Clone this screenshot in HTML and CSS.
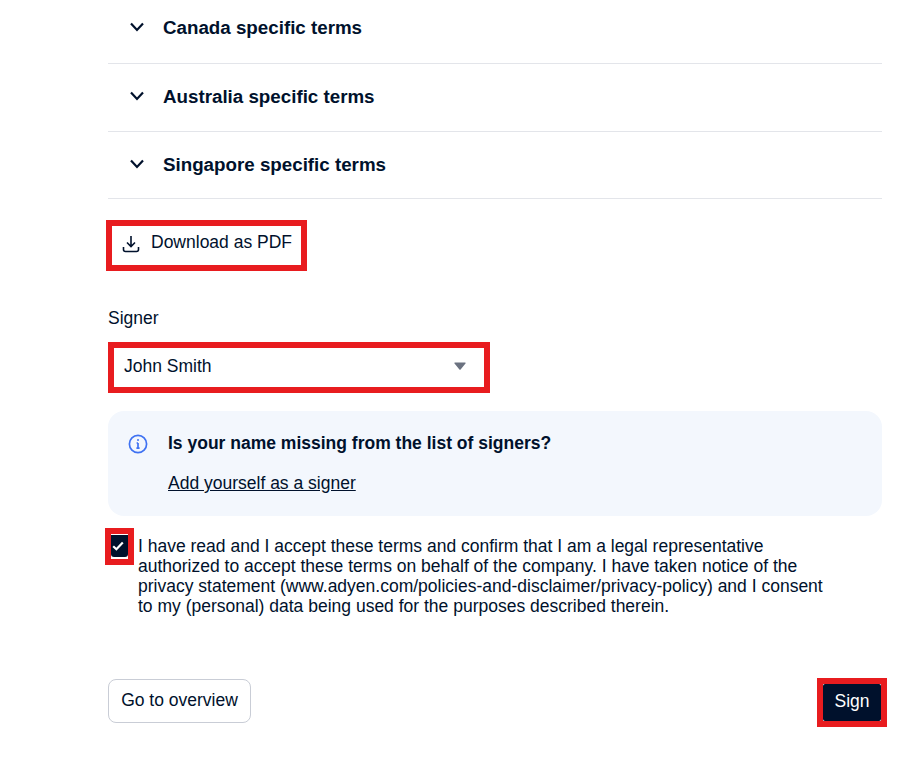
FILE: index.html
```html
<!DOCTYPE html>
<html lang="en">
<head>
<meta charset="utf-8">
<title>Terms</title>
<link rel="stylesheet" href="styles.css">
</head>
<body>
<main class="page">
  <section class="accordion">
    <div class="acc-row acc-first">
      <svg class="chev" width="16" height="16" viewBox="0 0 16 16"><path d="M2 4.5l6 6.5 6-6.5" fill="none" stroke="#00112c" stroke-width="2.2"/></svg>
      <span>Canada specific terms</span>
    </div>
    <div class="acc-row">
      <svg class="chev" width="16" height="16" viewBox="0 0 16 16"><path d="M2 4.5l6 6.5 6-6.5" fill="none" stroke="#00112c" stroke-width="2.2"/></svg>
      <span>Australia specific terms</span>
    </div>
    <div class="acc-row acc-last">
      <svg class="chev" width="16" height="16" viewBox="0 0 16 16"><path d="M2 4.5l6 6.5 6-6.5" fill="none" stroke="#00112c" stroke-width="2.2"/></svg>
      <span>Singapore specific terms</span>
    </div>
  </section>

  <div class="mark download">
    <svg width="18" height="18" viewBox="0 0 18 18" fill="none" stroke="#00112c" stroke-width="1.6"><path d="M9 1v10M5 7.5l4 4 4-4M1.5 12v2.5a2 2 0 0 0 2 2h11a2 2 0 0 0 2-2V12"/></svg>
    <span class="download-text">Download as PDF</span>
  </div>

  <label class="signer-label">Signer</label>
  <div class="mark select">
    <span>John Smith</span>
    <svg width="12" height="8" viewBox="0 0 12 8"><path d="M1 .5h10a.6.6 0 0 1 .5 1L6.6 7.4a.8.8 0 0 1-1.2 0L.5 1.5A.6.6 0 0 1 1 .5z" fill="#6b7280"/></svg>
  </div>

  <aside class="notice">
    <svg class="info" width="20" height="20" viewBox="0 0 20 20" fill="none" stroke="#3f72f2" stroke-width="1.7"><circle cx="10" cy="10" r="8.6"/><path d="M10 9v5.2M8.4 14.2h3.2M8.6 9H10"/><circle cx="10" cy="5.9" r="1" fill="#3f72f2" stroke="none"/></svg>
    <div class="notice-body">
      <strong>Is your name missing from the list of signers?</strong>
      <a class="notice-link" href="#">Add yourself as a signer</a>
    </div>
  </aside>

  <div class="consent">
    <span class="check-mark">
      <span class="check">
        <svg width="12" height="10" viewBox="0 0 12 10"><path d="M1.2 5.2l3.2 3L10.8 1.6" fill="none" stroke="#fff" stroke-width="2.2"/></svg>
      </span>
    </span>
    <p>I have read and I accept these terms and confirm that I am a legal representative authorized to accept these terms on behalf of the company. I have taken notice of the privacy statement (www.adyen.com/policies-and-disclaimer/privacy-policy) and I consent to my (personal) data being used for the purposes described therein.</p>
  </div>

  <div class="actions">
    <button class="btn-secondary" type="button">Go to overview</button>
    <span class="sign-mark"><button class="btn-primary" type="button">Sign</button></span>
  </div>
</main>
</body>
</html>
```
FILE: styles.css
```css
html, body {
  margin: 0;
  padding: 0;
  background: #fff;
}
body {
  font-family: "Liberation Sans", Arial, sans-serif;
  font-size: 17.5px;
  color: #00112c;
  overflow: hidden;
  height: 762px;
}
.page {
  width: 774px;
  margin-left: 108px;
  display: flex;
  flex-direction: column;
}
.acc-row {
  display: flex;
  align-items: center;
  gap: 18px;
  height: 67px;
  border-bottom: 1px solid #e3e5ea;
  font-size: 18.75px;
  font-weight: 700;
  padding-left: 21px;
}
.acc-row span { margin-bottom: 2px; }
.chev { flex: none; margin-bottom: 3px; }
.acc-first {
  height: 63px;
  align-items: flex-start;
}
.acc-first .chev { margin: 19px 0 0; }
.acc-first span { margin: 17px 0 0; }
.acc-row.acc-last { height: 66px; }
.acc-last span { margin-bottom: 0; }
.mark {
  border: 6px solid #e81c1f;
  box-sizing: border-box;
}
.download {
  margin-top: 21px;
  margin-left: -2px;
  width: 201px;
  height: 51px;
  display: flex;
  align-items: center;
  gap: 11px;
  padding: 0 0 4px 10px;
}
.download-text { margin-bottom: 2px; }
.signer-label {
  margin-top: 37px;
  line-height: 20px;
  display: block;
}
.select {
  margin-top: 14px;
  width: 382px;
  height: 51px;
  display: flex;
  align-items: center;
  justify-content: space-between;
  padding: 0 18px 3px 10px;
}
.notice {
  margin-top: 18px;
  height: 105px;
  background: #f3f7fd;
  border-radius: 16px;
  display: flex;
  box-sizing: border-box;
  padding: 22px 20px;
  gap: 20px;
}
.info { flex: none; margin-top: 1px; }
.notice-body {
  display: flex;
  flex-direction: column;
  align-items: flex-start;
  gap: 20px;
  line-height: 20px;
}
.notice-link {
  color: #00112c;
  text-decoration: underline;
}
.consent {
  margin-top: 12px;
  display: flex;
  margin-left: -3px;
  align-items: flex-start;
}
.check-mark {
  flex: none;
  width: 29px;
  height: 37px;
  background: #fff;
  border: 6px solid #e81c1f;
  box-sizing: border-box;
  display: flex;
  align-items: flex-start;
  justify-content: center;
  padding-top: 1px;
}
.check {
  width: 17px;
  height: 22px;
  flex: none;
  background: #00112c;
  border-radius: 0 0 3px 3px;
  display: flex;
  align-items: center;
  justify-content: flex-start;
  padding-left: 1px;
  box-sizing: border-box;
}
.consent p {
  margin: 8px 0 0 4px;
  width: 695px;
  line-height: 20px;
}
.actions {
  margin-top: 63px;
  display: flex;
  justify-content: space-between;
  align-items: flex-start;
}
.btn-secondary {
  font: inherit;
  color: #00112c;
  width: 143px;
  height: 44px;
  background: #fff;
  border: 1px solid #c9cdd6;
  border-radius: 8px;
  padding: 0 0 2px;
}
.sign-mark {
  border: 6px solid #e81c1f;
  margin: -1px -5px 0 0;
  display: flex;
}
.btn-primary {
  font: inherit;
  color: #fff;
  background: #00112c;
  border: 0;
  width: 58px;
  height: 37px;
  padding: 0 0 3px;
  border-radius: 2px;
}
```
